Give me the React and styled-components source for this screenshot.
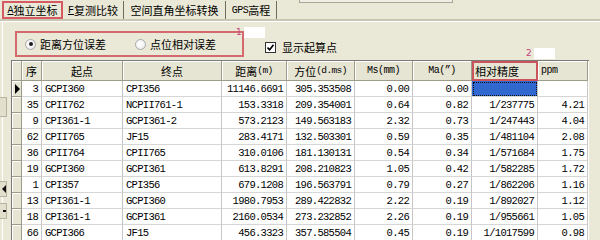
import React from 'react';
import styled, { createGlobalStyle } from 'styled-components';

const GlobalStyle = createGlobalStyle`
  body {
    margin: 0;
    background: #eae8d6;
    font-family: "Noto Sans CJK SC", "Liberation Sans", sans-serif;
    font-size: 11px;
    color: #000;
  }
`;

const cjk = `"Noto Sans CJK SC", "Liberation Sans", sans-serif`;
const mono = `"Liberation Mono", "Noto Sans CJK SC", monospace`;

const columns = [
  { key: 'ind', w: 10 },
  { key: 'no', w: 20, title: '序', align: 'right', head: 'center' },
  { key: 'from', w: 81, title: '起点', align: 'left', head: 'center' },
  { key: 'to', w: 99, title: '终点', align: 'left', head: 'center' },
  { key: 'dist', w: 65, title: '距离', unit: '(m)', align: 'right', head: 'center' },
  { key: 'az', w: 68, title: '方位', unit: '(d.ms)', align: 'right', head: 'center' },
  { key: 'ms', w: 58, title: 'Ms(mm)', align: 'right', head: 'center' },
  { key: 'ma', w: 59, title: 'Ma(\u201D)', align: 'right', head: 'center' },
  { key: 'rel', w: 66, title: '相对精度', align: 'right', head: 'left' },
  { key: 'ppm', w: 50, title: 'ppm', align: 'right', head: 'left' },
];

const template = columns.map((c) => `${c.w}px`).join(' ');

const rows = [
  ['3', 'GCPI360', 'CPI356', '11146.6691', '305.353508', '0.00', '0.00', '', ''],
  ['35', 'CPII762', 'NCPII761-1', '153.3318', '209.354001', '0.64', '0.82', '1/237775', '4.21'],
  ['9', 'CPI361-1', 'GCPI361-2', '573.2123', '149.563183', '2.32', '0.73', '1/247443', '4.04'],
  ['62', 'CPII765', 'JF15', '283.4171', '132.503301', '0.59', '0.35', '1/481104', '2.08'],
  ['36', 'CPII764', 'CPII765', '310.0106', '181.130131', '0.54', '0.34', '1/571684', '1.75'],
  ['19', 'GCPI360', 'GCPI361', '613.8291', '208.210823', '1.05', '0.42', '1/582285', '1.72'],
  ['1', 'CPI357', 'CPI356', '679.1208', '196.563791', '0.79', '0.27', '1/862206', '1.16'],
  ['13', 'CPI361-1', 'GCPI360', '1980.7953', '289.422832', '2.22', '0.19', '1/892027', '1.12'],
  ['18', 'CPI361-1', 'GCPI361', '2160.0534', '273.232852', '2.26', '0.19', '1/955661', '1.05'],
  ['66', 'GCPI366', 'JF15', '456.3323', '357.585504', '0.45', '0.19', '1/1017599', '0.98'],
];

const Page = styled.div`
  width: 600px;
  height: 240px;
  overflow: hidden;
  position: relative;
`;

const TabBar = styled.div`
  display: flex;
  align-items: flex-start;
  height: 22px;
  box-sizing: border-box;
  border-bottom: 1px solid #fff;
  box-shadow: inset 0 -2px 0 #c9c6b4;
  padding-left: 2px;
`;

const Tab = styled.div`
  height: 18px;
  margin-top: 1px;
  box-sizing: border-box;
  padding: 0 ${(p) => (p.$active ? 3 : 5)}px;
  display: flex;
  align-items: center;
  font-family: ${cjk};
  font-size: 11px;
  white-space: nowrap;
  border-right: ${(p) => (p.$active ? '2px solid #d65a62' : '1px solid #6e6c60')};
  border-left: ${(p) => (p.$active ? '2px solid #d65a62' : 'none')};
  border-top: ${(p) => (p.$active ? '2px solid #d65a62' : 'none')};
  border-bottom: ${(p) => (p.$active ? '2px solid #d65a62' : 'none')};
  width: ${(p) => p.$w}px;
  justify-content: center;

  u {
    font-family: ${mono};
    font-size: 10px;
  }
`;

const Latin = styled.span`
  font-family: ${mono};
  font-size: 10px;
  letter-spacing: -0.5px;
`;

const TopStub = styled.div`
  margin-left: 22px;
  width: 152px;
  height: 3px;
  margin-top: -1px;
  background: #f0efe6;
  border: 1px solid #a8a696;
  border-top: none;
`;

const Body = styled.div`
  display: flex;
`;

const LeftStrip = styled.div`
  width: 11px;
  flex: none;
  display: flex;
  flex-direction: column;
  border-left: 1px solid #fff;
  margin-left: 2px;
  box-sizing: border-box;
  padding-top: 75px;
  gap: 4px;
`;

const StubButton = styled.div`
  width: 6px;
  height: ${(p) => p.$h}px;
  margin-top: ${(p) => p.$mt || 0}px;
  margin-left: -3px;
  border: 1px solid #b6b3a0;
  border-left: none;
  background: #e2dfcc;
  display: flex;
  align-items: center;
  justify-content: flex-end;
  overflow: hidden;
`;

const Main = styled.div`
  flex: 1;
  display: flex;
  flex-direction: column;
`;

const Options = styled.div`
  height: 38px;
  box-sizing: border-box;
  padding: 9px 0 0 2px;
  display: flex;
  align-items: flex-start;
`;

const RedGroup = styled.div`
  position: relative;
  width: 229px;
  height: 26px;
  box-sizing: border-box;
  border: 2px solid #d46a6e;
  display: flex;
  align-items: center;
  padding-left: 8px;
`;

const Tag = styled.div`
  position: absolute;
  top: ${(p) => p.$top}px;
  left: ${(p) => p.$left}px;
  display: flex;
  align-items: center;
  font-family: "DejaVu Sans", sans-serif;
  font-size: 9px;
  color: #c8407a;
  line-height: 9px;

  &::after {
    content: '';
    display: block;
    width: 21px;
    height: 11px;
    background: #fff;
    margin-left: 2px;
  }
`;

const Radio = styled.label`
  display: flex;
  align-items: center;
  gap: 4px;
  font-family: ${cjk};
  font-size: 11px;
  width: ${(p) => p.$w}px;
`;

const RadioDot = styled.span`
  width: 11px;
  height: 11px;
  border-radius: 50%;
  box-sizing: border-box;
  border: 1px solid #a9a9a9;
  background: radial-gradient(circle at 40% 40%, #fff 0%, #f2f2f2 60%, #dcdcdc 100%);
  display: flex;
  align-items: center;
  justify-content: center;

  &::after {
    content: '';
    width: 4px;
    height: 4px;
    border-radius: 50%;
    background: ${(p) => (p.$on ? '#1e1e1e' : 'transparent')};
  }
`;

const Check = styled.label`
  display: flex;
  align-items: center;
  gap: 6px;
  margin-left: 21px;
  margin-top: 8px;
  font-family: ${cjk};
  font-size: 11px;
`;

const CheckBox = styled.span`
  width: 11px;
  height: 11px;
  box-sizing: border-box;
  border: 1px solid #333;
  background: #fff;
  display: flex;
  align-items: center;
  justify-content: center;
`;

const Grid = styled.div`
  border-top: 1px solid #7a7a7a;
  border-left: 1px solid #7a7a7a;
  margin-left: -2px;
  width: 577px;
  background: #fff;
`;

const Row = styled.div`
  display: grid;
  grid-template-columns: ${template};
  height: ${(p) => (p.$head ? 20 : 16)}px;
`;

const HeadCell = styled.div`
  position: relative;
  box-sizing: border-box;
  background: #e6e4d2;
  border-right: 1px solid #9d9b8a;
  border-bottom: 1px solid #9d9b8a;
  box-shadow: inset 1px 1px 0 #fff;
  display: flex;
  align-items: center;
  justify-content: ${(p) => (p.$align === 'left' ? 'flex-start' : 'center')};
  padding: 0 3px;
  font-family: ${cjk};
  font-size: 11px;
  white-space: nowrap;
  outline: ${(p) => (p.$marked ? '2px solid #c9545c' : 'none')};
  outline-offset: -2px;
`;

const Unit = styled.span`
  font-family: ${mono};
  font-size: 9.5px;
  letter-spacing: -0.6px;
`;

const HeadMono = styled.span`
  font-family: ${mono};
  font-size: 10px;
  letter-spacing: -0.5px;
`;

const IndCell = styled.div`
  box-sizing: border-box;
  background: #e6e4d2;
  border-right: 1px solid #9d9b8a;
  border-bottom: 1px solid #9d9b8a;
  box-shadow: inset 1px 1px 0 #fff;
  display: flex;
  align-items: center;
  justify-content: center;
`;

const Cell = styled.div`
  box-sizing: border-box;
  border-right: 1px solid #c6c6c6;
  border-bottom: 1px solid #d6d6d6;
  display: flex;
  align-items: center;
  justify-content: ${(p) => (p.$align === 'left' ? 'flex-start' : 'flex-end')};
  padding: 0 3px;
  font-family: ${mono};
  font-size: 10.5px;
  letter-spacing: -0.7px;
  white-space: nowrap;
  background: ${(p) => (p.$selected ? '#3168d0' : '#fff')};
  outline: ${(p) => (p.$selected ? '1px dotted #111' : 'none')};
  outline-offset: -2px;
`;

const Pointer = styled.span`
  width: 0;
  height: 0;
  border-top: 5px solid transparent;
  border-bottom: 5px solid transparent;
  border-left: 5px solid #000;
  margin-left: 1px;
`;

const App = () => {
  return (
    <Page>
      <GlobalStyle />
      <TabBar>
        <Tab $active $w={61}>
          <u>A</u>独立坐标
        </Tab>
        <Tab $w={61}>
          <u>F</u>复测比较
        </Tab>
        <Tab $w={102}>空间直角坐标转换</Tab>
        <Tab $w={51}>
          <Latin>GPS</Latin>高程
        </Tab>
        <TopStub />
      </TabBar>
      <Body>
        <LeftStrip>
          <StubButton $h={18} />
          <StubButton $h={14} $mt={60}>
            <svg width="4" height="8" viewBox="0 0 4 8">
              <path d="M4 0 L0 4 L4 8 Z" fill="#111" />
            </svg>
          </StubButton>
          <StubButton $h={14} $mt={2}>
            <svg width="3" height="4" viewBox="0 0 3 4">
              <rect x="0" y="1" width="3" height="2" fill="#111" />
            </svg>
          </StubButton>
        </LeftStrip>
        <Main>
          <Options>
            <RedGroup>
              <Tag $top={-6} $left={219}>1</Tag>
              <Radio $w={110}>
                <RadioDot $on />
                距离方位误差
              </Radio>
              <Radio $w={100}>
                <RadioDot />
                点位相对误差
              </Radio>
            </RedGroup>
            <Check>
              <CheckBox>
                <svg width="7" height="7" viewBox="0 0 7 7">
                  <path d="M0.5 3.5 L2.6 5.8 L6.5 0.8" fill="none" stroke="#000" strokeWidth="1.6" />
                </svg>
              </CheckBox>
              显示起算点
            </Check>
          </Options>
          <Grid>
            <Row $head>
              <IndCell />
              {columns.slice(1).map((c) => (
                <HeadCell key={c.key} $align={c.head} $marked={c.key === 'rel'}>
                  {c.key === 'rel' && <Tag $top={-13} $left={54}>2</Tag>}
                  {/[\u4e00-\u9fff]/.test(c.title) ? c.title : <HeadMono>{c.title}</HeadMono>}
                  {c.unit && <Unit>{c.unit}</Unit>}
                </HeadCell>
              ))}
            </Row>
            {rows.map((r, i) => (
              <Row key={i}>
                <IndCell>{i === 0 && <Pointer />}</IndCell>
                {r.map((v, j) => (
                  <Cell
                    key={j}
                    $align={columns[j + 1].align}
                    $selected={i === 0 && columns[j + 1].key === 'rel'}
                  >
                    {v}
                  </Cell>
                ))}
              </Row>
            ))}
          </Grid>
        </Main>
      </Body>
    </Page>
  );
};

export default App;
